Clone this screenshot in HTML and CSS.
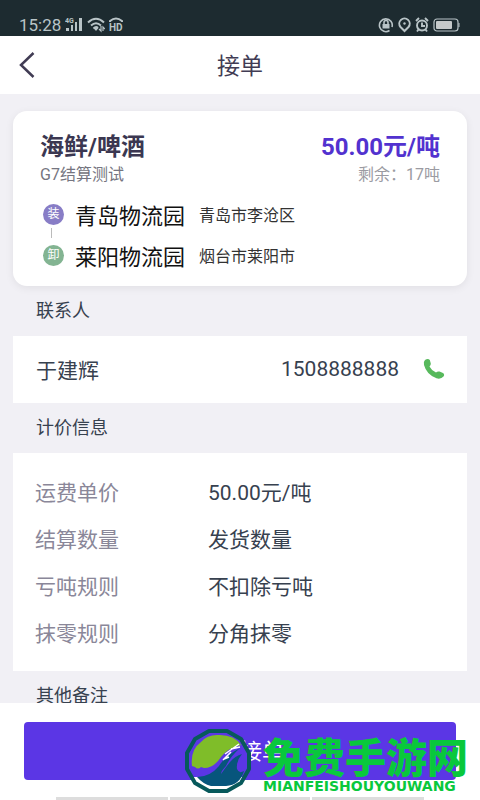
FILE: index.html
```html
<!DOCTYPE html>
<html lang="zh-CN">
<head>
<meta charset="utf-8">
<meta name="viewport" content="width=device-width, initial-scale=1">
<title>接单</title>
<link rel="stylesheet" href="styles.css">
</head>
<body>
<div class="screen">
  <div class="status">
    <div class="status-group">
      <span class="clock">15:28</span>
      <svg width="18" height="16" viewBox="0 0 18 16" fill="#b9c4c7"><text x="0" y="6" class="tiny">4G</text><rect x="1" y="11" width="3" height="3"/><rect x="6" y="8" width="2" height="6"/><rect x="10" y="5" width="2" height="9"/><rect x="14" y="1" width="3" height="13"/></svg>
      <svg width="18" height="16" viewBox="0 0 18 16" fill="none" stroke="#b9c4c7" stroke-width="2"><path d="M1 5.500Q9 -2 17 5.500M4 8.500Q9 4 14 8.500M6.500 11.500Q9 9 11 11"/><path d="M6.500 11h5l-2.500 3z" fill="#b9c4c7" stroke="none"/><path d="M14 9v5l-2-2M16 14v-4l2 2" stroke-width="1.200"/></svg>
      <svg width="16" height="16" viewBox="0 0 16 16" fill="#b9c4c7"><path d="M1 5V4Q7 -1 13 4V5" fill="none" stroke="#b9c4c7" stroke-width="2"/><text x="0" y="14" class="hd">HD</text></svg>
    </div>
    <div class="status-group">
      <svg width="16" height="16" viewBox="0 0 16 16" fill="none" stroke="#b9c4c7" stroke-width="1.600"><path d="M11.500 13.500A6.400 6.400 0 1 1 14 10"/><rect x="4.500" y="7" width="7" height="4.500" fill="#b9c4c7" stroke="none"/><path d="M6 7V5.500a2 2 0 0 1 4 0V7"/></svg>
      <svg width="13" height="16" viewBox="0 0 13 16" fill="none" stroke="#b9c4c7" stroke-width="2"><path d="M6.500 14L2.500 10A5.200 5.200 0 1 1 10.500 10z"/><circle cx="6.500" cy="6.500" r="1.200" fill="#b9c4c7" stroke="none"/></svg>
      <svg width="14" height="16" viewBox="0 0 14 16" fill="none" stroke="#b9c4c7" stroke-width="1.900"><circle cx="7" cy="8.500" r="5"/><path d="M7 5.500V9h3M1 4l3-3M10 1l3 3M3.500 12.500L2 14.500M10.500 12.500l1.500 2"/></svg>
      <svg width="27" height="16" viewBox="0 0 27 16" fill="none" stroke="#b9c4c7"><rect x="1" y="2" width="24" height="12" rx="3" stroke-width="1.200"/><rect x="3" y="4" width="16" height="8" rx="1" fill="#c5c9ca" stroke="none"/><path d="M26 6v4"/></svg>
    </div>
  </div>
  <header class="nav">
    <button class="back" aria-label="返回"><svg width="18" height="28" viewBox="0 0 18 28" fill="none" stroke="#413c54" stroke-width="2.500"><path d="M15.500 2L3 14l12.500 12"/></svg></button>
    <h1>接单</h1>
  </header>
  <main>
    <section class="order">
      <div class="row goods"><h2>海鲜/啤酒</h2><strong>50.00元/吨</strong></div>
      <div class="row meta"><span>G7结算测试</span><span class="left">剩余：17吨</span></div>
      <div class="stop"><span class="tag load">装</span><b>青岛物流园</b><span>青岛市李沧区</span></div>
      <div class="link"></div>
      <div class="stop"><span class="tag unload">卸</span><b>莱阳物流园</b><span>烟台市莱阳市</span></div>
    </section>
    <h3>联系人</h3>
    <section class="panel contact">
      <span>于建辉</span>
      <a href="tel:1508888888">1508888888<svg width="22" height="22" viewBox="0 0 22 22" fill="#57b95c"><path d="M2 2Q5 0 6.800 2L7.800 5.500Q8 7 6.500 8.500Q8.500 12.500 13 14.500Q14.500 13 16.500 13.500L20 15Q22 16.500 20.500 18.500Q18 21.500 13.500 20.300Q3.500 16.500 1 7Q.3 3.500 2 2z"/></svg></a>
    </section>
    <h3>计价信息</h3>
    <dl class="panel price">
      <dt>运费单价</dt><dd>50.00元/吨</dd>
      <dt>结算数量</dt><dd>发货数量</dd>
      <dt>亏吨规则</dt><dd>不扣除亏吨</dd>
      <dt>抹零规则</dt><dd>分角抹零</dd>
    </dl>
    <h3>其他备注</h3>
  </main>
  <footer>
    <button class="accept">我要接单</button>
    <div class="keys"><i></i><i class="home"></i><i></i></div>
    <div class="brand">
      <svg width="66" height="66" viewBox="0 0 66 66"><path d="M24 3H42L56 11 64 25V41L56 55 42 63H24L10 55 2 41V25L10 11z" fill="#5b36e5"/><path d="M5 49H61L56 55 42 63H24L10 55z" fill="#fff"/><path d="M24 3H42L56 11 64 25V41L56 55 42 63H24L10 55 2 41V25L10 11z" fill="none" stroke="#07595b" stroke-width="4" stroke-linejoin="round"/><path d="M7 38Q5 22 16 14Q22 7 32 7Q49 6 56 17Q43 20 36 29Q29 40 19 40L16 39Q13 42 10 39z" fill="#7fbd29"/><path d="M12 49Q25 49 34 38Q40 28 55 20Q45 29 41 38Q36 43 36 46Q41 39 45 34Q50 28 57 26Q51 33 52 41Q54 46 59 43Q55 57 41 58H26Q18 56 12 49z" fill="#07557c"/><path d="M38 32l8-8M40 26l14-10M46 21l9-2M39 31l5-2" stroke="#fff" stroke-width="1.500"/></svg>
      <div><div class="brand-name">免费手游网</div><div class="brand-latin">MIANFEISHOUYOUWANG</div></div>
    </div>
  </footer>
</div>
</body>
</html>
```
FILE: styles.css
```css
* { box-sizing: border-box; }
body { margin: 0; background: #f1f0f5; color: #37414f; font-family: Roboto, "Noto Sans CJK SC", sans-serif; }
h1, h2, h3, dl, dd { margin: 0; font-weight: 400; }
button { border: 0; padding: 0; font: inherit; }
svg { display: block; flex: none; }
.screen { height: 100vh; display: flex; flex-direction: column; overflow: hidden; }
.status { flex: none; height: 36px; padding: 13px 20px 0 19px; display: flex; justify-content: space-between; background: #1d2b30; color: #b9c4c7; }
.status-group { display: flex; align-items: center; gap: 4px; }
.clock { font-size: 17px; line-height: 22px; }
.tiny { font: 700 7px Roboto, sans-serif; }
.hd { font: 700 10px Roboto, sans-serif; }
.nav { flex: none; height: 58px; display: grid; grid-template-columns: 56px 1fr 56px; align-items: center; background: #fff; color: #413c54; }
.back { justify-self: start; margin-left: 18px; background: none; }
h1 { padding-top: 4px; font-size: 23px; line-height: 32px; text-align: center; }
main { flex: 1; min-height: 0; overflow: hidden; padding: 17px 13px 0; }
.order { padding: 21px 27px 15px; border-radius: 14px; background: #fff; box-shadow: 0 2px 8px #00000012; }
.row { display: flex; justify-content: space-between; }
.goods { font-size: 24px; line-height: 30px; color: #3b3751; }
.goods h2 { font-size: 24px; font-weight: 700; }
.goods strong { color: #5232cf; }
.meta { font-size: 16px; line-height: 26px; color: #757580; }
.left { color: #9b9ba2; }
.stop { display: flex; align-items: center; margin-top: 10px; height: 32px; color: #333; font-size: 16px; }
.stop b { margin: 0 14px 0 11px; font-size: 22px; font-weight: 400; color: #111; }
.tag { width: 21px; height: 21px; margin-left: 3px; border-radius: 50%; color: #fff; font-size: 12px; line-height: 21px; text-align: center; }
.load { background: #887dc6; }
.unload { background: #83b492; }
.link { width: 1px; height: 10px; margin: -2px 0 -9px 11px; background: #bbb; }
h3 { padding-left: 23px; font-size: 18px; line-height: 50px; height: 50px; }
.panel { background: #fff; }
.contact { height: 67px; padding: 0 22px 2px 23px; display: flex; align-items: center; justify-content: space-between; font-size: 21px; }
.contact a { display: flex; align-items: center; gap: 24px; color: inherit; text-decoration: none; }
.price { padding: 14px 22px 16px; display: grid; grid-template-columns: 173px 1fr; grid-auto-rows: 47px; align-items: center; font-size: 21px; }
dt { color: #8a8799; }
footer { position: relative; flex: none; height: 97px; padding: 19px 24px 0; background: #fff; overflow: hidden; }
.accept { display: block; width: 100%; height: 58px; padding-bottom: 4px; border-radius: 4px; background: #5b36e5; color: #fff; font-size: 22px; }
.keys { display: flex; gap: 2px; margin: 17px 32px 0; }
.keys i { flex: 4; height: 3px; background: #ddd; }
.keys .home { flex: 5; }
.brand { position: absolute; right: 12px; bottom: 6px; display: flex; gap: 12px; align-items: center; color: #09c83c; }
.brand-name { padding-top: 4px; font: 900 41px/46px "Noto Sans CJK SC", serif; }
.brand-latin { font: 700 14px/16px "DejaVu Sans", sans-serif; }
```
